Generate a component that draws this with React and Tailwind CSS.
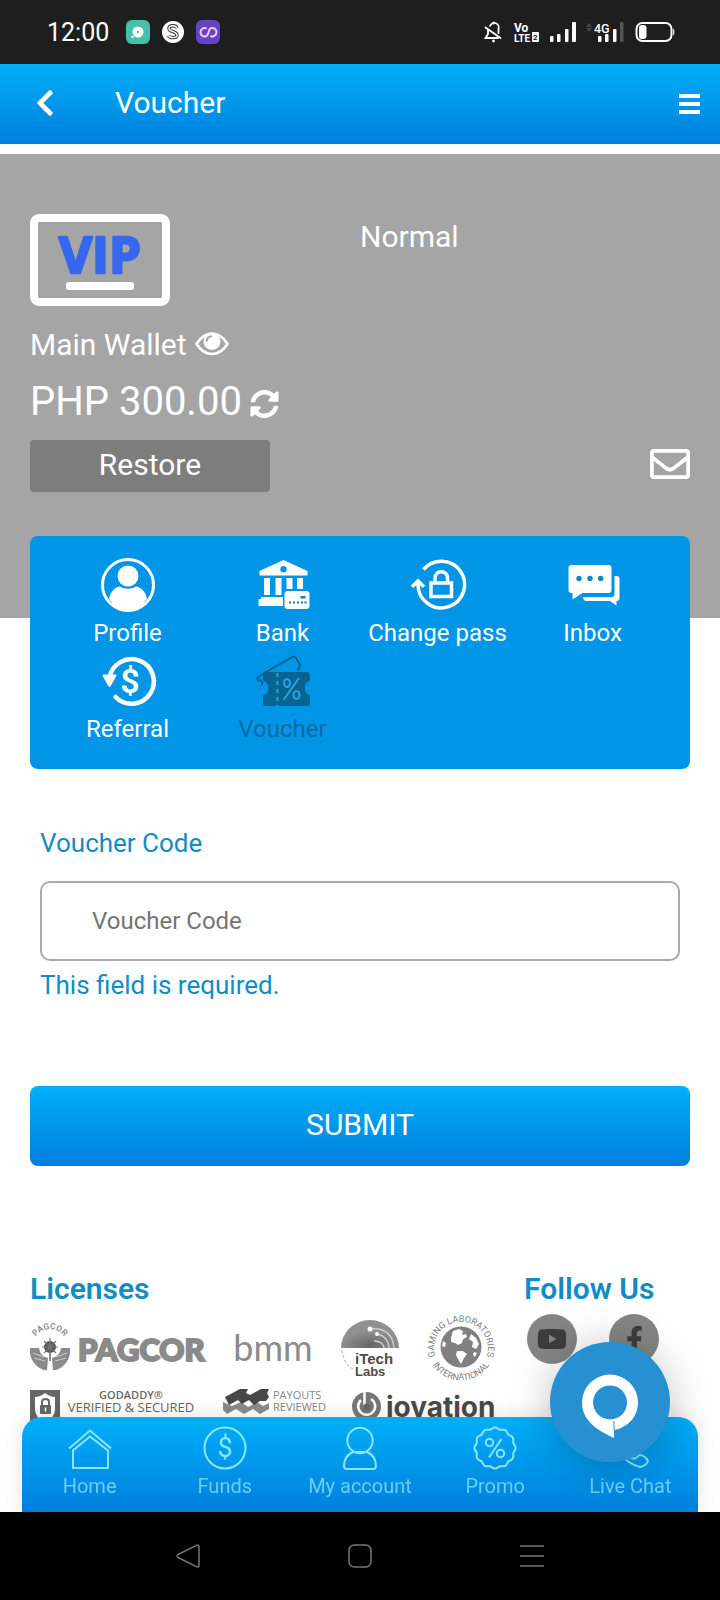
import React, { useState } from "react";
import { FaChevronLeft, FaRegEnvelope, FaSyncAlt, FaYoutube, FaFacebookF } from "react-icons/fa";

/* ---------- Status bar ---------- */

function StatusBar() {
  return (
    <div className="h-16 shrink-0 bg-[#1e1e1e] pl-[47px] pr-[44px] flex items-center justify-between text-white">
      <div className="flex items-center">
        <span className="text-[25px] leading-8 pt-[2px]">12:00</span>
        <svg className="ml-[17px]" width="96" height="24" viewBox="0 0 96 24" aria-hidden="true">
          <rect width="24" height="24" rx="6" fill="#45c0aa" />
          <circle cx="12" cy="12" r="5.5" fill="#fff" />
          <circle cx="12" cy="12" r="1.2" fill="#45c0aa" />
          <circle cx="6.5" cy="17" r="1.2" fill="#fff" />
          <circle cx="47" cy="12" r="11" fill="#fff" />
          <path d="M51 8c-1-3-8-3-8 .4 0 4 8 2.4 8 6.6 0 3.4-7 3.4-8.5.4" fill="none" stroke="#333" strokeWidth="3.4" />
          <path d="M51 8c-1-3-8-3-8 .4 0 4 8 2.4 8 6.6 0 3.4-7 3.4-8.5.4" fill="none" stroke="#fff" strokeWidth="1.4" />
          <rect x="70" width="24" height="24" rx="6" fill="#6343c8" />
          <path d="M80 8.200a4.200 4.200 0 1 0 0 8c3.500-1 2-8 5-8a4.200 4.200 0 1 1 0 8" fill="none" stroke="#f0c8ff" strokeWidth="2" strokeLinecap="round" />
        </svg>
      </div>
      <svg width="196" height="28" viewBox="480 18 196 28" fill="#fff" aria-hidden="true">
        <g fill="none" stroke="#fff" strokeWidth="1.8" strokeLinecap="round">
          <path d="M490 26a4.500 4.500 0 0 1 8.500 3v4M488 29.500v4.500l-2.500 4H498M485.500 27.500l15 10.500" />
          <path d="M493.500 22.500v1" />
        </g>
        <circle cx="493.5" cy="41" r="1.4" />
        <text x="514" y="32" fontSize="12" fontWeight="700">Vo</text>
        <text x="514" y="42" fontSize="10" fontWeight="700">LTE</text>
        <rect x="532" y="32" width="7" height="10" rx="1" />
        <text x="533" y="40" fontSize="8" fontWeight="700" fill="#1e1e1e">2</text>
        <rect x="550" y="36" width="3.5" height="6" rx="1" />
        <rect x="557" y="34" width="3.5" height="8" rx="1" />
        <rect x="565" y="29" width="3.5" height="13" rx="1" />
        <rect x="572" y="22" width="4" height="20" rx="1" />
        <path d="M589 23l3 4h-6zM589 32l3-4h-6z" fill="#444" />
        <text x="594" y="33" fontSize="12.5" fontWeight="500">4G</text>
        <rect x="598" y="36" width="3.5" height="6" rx="1" />
        <rect x="605" y="34" width="3.5" height="8" rx="1" />
        <rect x="613" y="29" width="3.5" height="13" rx="1" />
        <rect x="620" y="22" width="3.5" height="20" rx="1" fill="#555" />
        <rect x="636.5" y="23" width="35" height="18" rx="6" fill="none" stroke="#fff" strokeWidth="2" />
        <rect x="639" y="25" width="7.5" height="14" rx="3" />
        <path d="M673 28.500q1.500 0 1.500 3.500t-1.500 3.500z" fill="#ccc" />
      </svg>
    </div>
  );
}

/* ---------- Header ---------- */

function Header() {
  return (
    <header className="h-20 shrink-0 bg-linear-to-b from-[#02aff8] to-[#027fdc] pl-8 pr-5 pb-[2px] flex items-center text-white">
      <button type="button" aria-label="Back" className="w-[83px]">
        <FaChevronLeft className="w-[26px] h-[30px]" />
      </button>
      <h1 className="text-[30px] leading-[44px] flex-1">Voucher</h1>
      <button type="button" aria-label="Menu" className="pt-[2px]">
        <svg width="21" height="20" viewBox="0 0 21 20" fill="currentColor">
          <rect width="21" height="4" />
          <rect y="8" width="21" height="4" />
          <rect y="16" width="21" height="4" />
        </svg>
      </button>
    </header>
  );
}

/* ---------- Wallet ---------- */

function VipBadge() {
  return (
    <svg width="140" height="92" viewBox="0 0 140 92" role="img" aria-label="VIP">
      <rect x="4" y="4" width="132" height="84" rx="5" fill="none" stroke="#fff" strokeWidth="8" />
      <text x="70" y="59" textAnchor="middle" fontSize="51" fontWeight="700" fill="#3568ec" stroke="#3568ec" strokeWidth="2.5" strokeLinejoin="round" fontFamily="'Open Sans', sans-serif">VIP</text>
      <rect x="36" y="68" width="68" height="8" rx="2.5" fill="#fff" />
    </svg>
  );
}

function EyeIcon() {
  return (
    <svg width="34" height="30" viewBox="0 0 34 30" aria-hidden="true">
      <path d="M1.500 15Q8 4.500 17 4.500T32.500 15Q26 25 17 25T1.500 15z" fill="none" stroke="currentColor" strokeWidth="2.6" />
      <path fillRule="evenodd" fill="currentColor" d="M17 4a8.500 8.500 0 1 1 0 17A8.500 8.500 0 0 1 17 4zM16 6.500q-4.800.5-5.300 5.200 0 1.200 1 1.200t1.100-1.200q.3-3 3.200-3.300 1.200 0 1.200-1t-1.200-.9z" />
    </svg>
  );
}

function Wallet() {
  return (
    <section className="mt-[10px] bg-[#a5a5a5] px-[30px] pt-[60px] pb-[126px] text-white">
      <div className="grid grid-cols-2">
        <VipBadge />
        <span className="text-[30px] leading-[46px]">Normal</span>
      </div>
      <div className="mt-4 flex items-center gap-2 text-[30px] leading-[46px]">
        <span>Main Wallet</span>
        <button type="button" aria-label="Show balance" className="pb-[2px]">
          <EyeIcon />
        </button>
      </div>
      <div className="mt-1 flex items-center gap-2 text-[40px] leading-[60px]">
        <span>PHP 300.00</span>
        <button type="button" aria-label="Refresh balance" className="pt-1">
          <FaSyncAlt className="w-[29px] h-[30px]" />
        </button>
      </div>
      <div className="mt-2 flex items-start justify-between">
        <button type="button" className="w-60 h-[52px] rounded bg-[#7d7d7d] pb-[2px] text-[30px] leading-[44px]">
          Restore
        </button>
        <a href="#inbox" aria-label="Messages" className="h-12 flex items-center">
          <FaRegEnvelope className="size-10" />
        </a>
      </div>
    </section>
  );
}

/* ---------- Account menu ---------- */

const MENU = [
  {
    label: "Profile",
    icon: (
      <>
        <circle cx="27" cy="27" r="25.5" fill="none" stroke="#fff" strokeWidth="3" />
        <circle cx="27" cy="18" r="10.5" />
        <path d="M8 41c1-8 7-12 11-12.500 5 3 11 3 16 0 4 .5 10 4.500 11 12.500a25 25 0 0 1-38 0z" />
        <path d="M9 41a24 24 0 0 0 36 0l-4 8a27 27 0 0 1-28 0z" />
      </>
    ),
  },
  {
    label: "Bank",
    icon: (
      <>
        <path fillRule="evenodd" d="M27.500 2L51.500 13v4.500H3.500V13zM27.500 8a3.200 3.200 0 1 0 0 6.400 3.200 3.200 0 0 0 0-6.400z" />
        <path d="M8 20h6v17H8zM19.500 20h6v17h-6zM30.500 20h6v11h-6zM41 20h6v11h-6zM5 39h22v9H2.500v-7H5z" />
        <rect x="28.5" y="33" width="25" height="18" rx="3" />
        <path d="M44.500 38h5v2.500h-5zM33 43.500h2v2h-2zM37 43.500h2v2h-2zM41 43.500h2v2h-2zM45 43.500h2v2h-2zM48.500 43.500h2v2h-2z" fill="#0c7fc4" />
      </>
    ),
  },
  {
    label: "Change pass",
    icon: (
      <g fill="none" stroke="#fff" strokeWidth="3.5">
        <path d="M12.500 11.500A23.300 23.300 0 1 1 7 27.500v-3" />
        <path d="M1 28.800l6-5.800 6 5.800" />
        <rect x="20" y="25" width="20.5" height="13.5" />
        <path d="M24 25v-5a6.300 6.300 0 0 1 12.600 0v5" />
      </g>
    ),
  },
  {
    label: "Inbox",
    icon: (
      <>
        <path d="M5.500 7h37a3 3 0 0 1 3 3v22a3 3 0 0 1-3 3H16.500L6.500 41.500V35h-1a3 3 0 0 1-3-3V10a3 3 0 0 1 3-3z" />
        <path d="M48.500 18h2q3 0 3 3v19q0 3-3 3v4.500L44 43H20q-2.500 0-3-4h28.500q3 0 3-3z" />
        <g fill="#0c86d0">
          <circle cx="13" cy="20.5" r="2.7" />
          <circle cx="24" cy="20.5" r="2.7" />
          <circle cx="34.7" cy="20.5" r="2.7" />
        </g>
      </>
    ),
  },
  {
    label: "Referral",
    icon: (
      <>
        <path d="M14.500 43A22.300 22.300 0 1 0 8.500 24" fill="none" stroke="#fff" strokeWidth="4.5" strokeLinecap="round" />
        <path d="M2.500 21.500h12L8.500 32z" stroke="#fff" strokeWidth="2" strokeLinejoin="round" />
        <text x="29" y="38.5" textAnchor="middle" fontSize="34" fontWeight="600">$</text>
      </>
    ),
  },
  {
    label: "Voucher",
    active: true,
    icon: (
      <>
        <path d="M10 18L36.500 3q2.500-1 4 1.500l3.500 6.500-2 6M10 18l-8 5q-1.500 1.500 0 3.500c3-1 5.500 1 3.500 5" fill="none" stroke="#096391" strokeWidth="2" />
        <path fill="#096391" d="M10 18h41q3 0 3 3v5.500a8 8 0 0 0 0 15V49q0 3-3 3H10q-3 0-3-3v-7.500a8 8 0 0 0 0-15V21q0-3 3-3z" />
        <path d="M21.500 19v33" stroke="#2ba2dd" strokeWidth="2" strokeDasharray="4 4" />
        <g fill="none" stroke="#2ba2dd" strokeWidth="2">
          <path d="M43 24L27.500 46" />
          <ellipse cx="31" cy="29" rx="3" ry="4" />
          <ellipse cx="40.5" cy="41" rx="3" ry="4" />
        </g>
      </>
    ),
  },
];

function AccountMenu() {
  return (
    <nav className="relative mx-[30px] -mt-[82px] rounded-lg bg-[#0095e7] px-5 pt-[22px] pb-[25px] grid grid-cols-4 gap-y-[6px]">
      {MENU.map(({ label, icon, active }) => (
        <a key={label} href={`#${label}`} className="flex flex-col items-center gap-[6px] text-white">
          <svg className="size-[54px] overflow-visible" viewBox="0 0 54 54" fill="#fff" aria-hidden="true">
            {icon}
          </svg>
          <span className={active ? "text-[24px] leading-[30px] text-[#096ca5]" : "text-[24px] leading-[30px]"}>{label}</span>
        </a>
      ))}
    </nav>
  );
}

/* ---------- Voucher form ---------- */

function VoucherForm() {
  const [code, setCode] = useState("");

  return (
    <form className="mt-[54px] px-[30px]" onSubmit={(e) => e.preventDefault()}>
      <div className="px-[10px] flex flex-col text-[#118cc6] text-[26px] leading-10">
        <label htmlFor="voucher-code">Voucher Code</label>
        <input
          id="voucher-code"
          type="text"
          value={code}
          onChange={(e) => setCode(e.target.value)}
          placeholder="Voucher Code"
          aria-describedby="voucher-error"
          className="mt-[18px] h-20 w-full rounded-[10px] border-2 border-[#a9a9a9] bg-white px-[50px] text-[24px] text-gray-800 placeholder:text-[#757575] outline-none"
        />
        <p id="voucher-error" className="mt-1">This field is required.</p>
      </div>
      <button type="submit" className="mt-[81px] h-20 w-full rounded-lg bg-linear-to-b from-[#02aff8] to-[#027fdc] pb-[2px] text-[30px] leading-[44px] text-white">
        SUBMIT
      </button>
    </form>
  );
}

/* ---------- Footer ---------- */

function PagcorLogo() {
  return (
    <svg className="overflow-visible" width="177" height="70" viewBox="0 0 177 70" fill="#8a8a8a" role="img" aria-label="PAGCOR">
      <path id="pagcor-arc" d="M3.500 29A17 17 0 0 1 36.500 29" fill="none" />
      <text fontSize="8.5" fontWeight="600">
        <textPath href="#pagcor-arc" startOffset="50%" textAnchor="middle">PAGCOR</textPath>
      </text>
      <circle cx="20" cy="34" r="6" fill="#555" />
      <path d="M20 25v20M12 34h16M14 28l12 12M26 28L14 40" stroke="#777" strokeWidth="1.2" />
      <path d="M0 35h9q1 8 9 10l-1 12.500A20 20 0 0 1 0 35zM40 35h-9q-1 8-9 10l1 12.500A20 20 0 0 0 40 35z" />
      <path d="M3 40l11 4M4 45l11 3M37 40l-11 4M36 45l-11 3" stroke="#ccc" strokeWidth="1" />
      <path d="M19 40h2v8h-2z" />
      <text x="48" y="48" fontSize="31" fontWeight="900" fontFamily="Lato, sans-serif" stroke="#8a8a8a" strokeWidth="2">PAGCOR</text>
    </svg>
  );
}

function BmmLogo() {
  return (
    <svg className="overflow-visible" width="80" height="70" viewBox="0 0 80 70" role="img" aria-label="bmm">
      <text x="39" y="48" textAnchor="middle" fontSize="36" fontFamily="Lato, sans-serif" fill="#8c8c8c">bmm</text>
    </svg>
  );
}

function ItechLogo() {
  return (
    <svg className="overflow-visible" width="58" height="70" viewBox="0 0 58 70" role="img" aria-label="iTech Labs">
      <defs>
        <radialGradient id="itech" cy="0.9">
          <stop offset="0" stopColor="#666" />
          <stop offset="1" stopColor="#909090" />
        </radialGradient>
      </defs>
      <path d="M0 35a29 28 0 0 1 58 0z" fill="url(#itech)" />
      <g fill="none" stroke="#ccc" strokeWidth="1.5">
        <path d="M29 16q22-2 24 19M36 21q11 2 12 14M33 28q9 0 10 7" />
      </g>
      <circle cx="29" cy="16" r="2.5" fill="#fff" />
      <circle cx="36" cy="21" r="2" fill="#fff" />
      <path d="M1 37q1 13 11 19" fill="none" stroke="#aaa" strokeDasharray="3 2" />
      <text fontFamily="'Liberation Sans', sans-serif" fontWeight="700" fill="#4c4c4c">
        <tspan x="14" y="51" fontSize="15">iTech</tspan>
        <tspan x="14" y="63" fontSize="13">Labs</tspan>
      </text>
    </svg>
  );
}

function GliLogo() {
  return (
    <svg className="overflow-visible" width="70" height="70" viewBox="0 0 70 70" fill="#808080" role="img" aria-label="Gaming Laboratories International">
      <path id="gli-top" d="M9 43A27 27 0 1 1 61 43" fill="none" />
      <path id="gli-bottom" d="M1.500 34A33.500 33.500 0 0 0 68.500 34" fill="none" />
      <g fontSize="9">
        <text>
          <textPath href="#gli-top" startOffset="50%" textAnchor="middle">GAMING LABORATORIES</textPath>
        </text>
        <text>
          <textPath href="#gli-bottom" startOffset="50%" textAnchor="middle">INTERNATIONAL</textPath>
        </text>
      </g>
      <circle cx="35" cy="34" r="20.5" />
      <path fill="#fff" d="M27 18l6-2 4 2-1 4 4-1 1 3-4 2-1 4-4 2-3-2-4-1v-4zM45 21l5 4 3 6-3 5-4-2 1-5-4-3zM31 38l6 0 4 3-3 4-3 6-3-5-2-4zM17 28l3 2-1 4-3-1zM48 39l3 1-2 4-2-2z" />
    </svg>
  );
}

function GodaddyLogo() {
  return (
    <svg width="165" height="42" viewBox="0 0 165 42" fill="#666" role="img" aria-label="GoDaddy verified and secured">
      <rect y="3" width="30" height="39" />
      <path d="M15 6q5 4 10 4v12q0 9-10 13Q5 31 5 22V10q5 0 10-4z" fill="#fff" />
      <rect x="10" y="18" width="11" height="9" rx="1" />
      <path d="M12 18v-3q0-3 3.500-3t3.500 3v3" fill="none" stroke="#666" strokeWidth="2" />
      <rect x="14.7" y="20.5" width="1.6" height="4" fill="#fff" />
      <text fontFamily="'Open Sans', sans-serif" textAnchor="middle">
        <tspan x="101" y="12" fontSize="11" fontWeight="600">GODADDY®</tspan>
        <tspan x="101" y="25" fontSize="13" fontWeight="500">VERIFIED &amp; SECURED</tspan>
      </text>
    </svg>
  );
}

function PayoutsLogo() {
  return (
    <svg className="overflow-visible" width="101" height="42" viewBox="0 0 101 42" role="img" aria-label="Payouts reviewed">
      <path d="M0 15l9 4 9-4 7 5 9-5 6 4 6-3v6l-9 5-7-5-9 5-8-5-9 5-4-4z" fill="#8b8b8b" />
      <path d="M2 10L17 2h8l-2 4 4 2 11-6h8l-2 4 2 4-3 4-6 0-6 4-5-5-7 4-4-4-9 5z" fill="#474747" />
      <text fontFamily="'Open Sans', sans-serif" fontWeight="400" fill="#858585" fontSize="11">
        <tspan x="50" y="12">PAYOUTS</tspan>
        <tspan x="50" y="24">REVIEWED</tspan>
      </text>
    </svg>
  );
}

function IovationLogo() {
  return (
    <svg className="overflow-visible" width="144" height="42" viewBox="0 0 144 42" role="img" aria-label="iovation">
      <circle cx="14.5" cy="19.5" r="14.5" fill="#777" />
      <path d="M9 13a8.500 8.500 0 1 0 10-1" fill="none" stroke="#fff" strokeWidth="2.5" />
      <path d="M12.500 4v16" stroke="#fff" strokeWidth="2.5" />
      <circle cx="14.5" cy="20" r="3.5" fill="#666" />
      <text x="34" y="30" fontSize="28" fontWeight="700" fontFamily="Inter, sans-serif" fill="#4a4a4a">iovation</text>
    </svg>
  );
}

function Footer() {
  return (
    <footer className="mt-[101px] px-[30px] pb-[168px] flex justify-between">
      <section className="w-[466px]">
        <h2 className="text-[30px] leading-[44px] font-semibold text-[#118cc6]">Licenses</h2>
        <div className="pt-[2px] flex justify-between">
          <PagcorLogo />
          <BmmLogo />
          <ItechLogo />
          <GliLogo />
        </div>
        <div className="mt-1 flex justify-between">
          <GodaddyLogo />
          <PayoutsLogo />
          <IovationLogo />
        </div>
      </section>
      <section className="w-[166px]">
        <h2 className="text-[30px] leading-[44px] font-semibold text-[#118cc6]">Follow Us</h2>
        <div className="mt-[3px] px-[3px] flex gap-8">
          <a href="#youtube" aria-label="YouTube" className="size-[50px] rounded-full bg-[#858585] flex items-center justify-center text-[#3d3d3d]">
            <FaYoutube className="size-[30px]" />
          </a>
          <a href="#facebook" aria-label="Facebook" className="size-[50px] rounded-full bg-[#858585] flex items-center justify-center text-[#3d3d3d]">
            <FaFacebookF className="size-[27px]" />
          </a>
        </div>
      </section>
    </footer>
  );
}

/* ---------- Tab bar ---------- */

// wavy seal outline with twelve bumps
const SEAL = Array.from({ length: 120 }, (_, i) => {
  const a = (i / 120) * Math.PI * 2;
  const r = 19.8 + 0.8 * Math.cos(12 * a);
  return `${(22 + r * Math.cos(a)).toFixed(2)},${(23 + r * Math.sin(a)).toFixed(2)}`;
}).join(" ");

const TABS = [
  {
    label: "Home",
    icon: <path d="M1 23.500L22 5.500l21 18M5 25.500V43h35V25.500L22 11.500z" />,
  },
  {
    label: "Funds",
    icon: (
      <>
        <circle cx="22" cy="23" r="20.5" />
        <text x="22" y="32" textAnchor="middle" fontSize="27" fill="currentColor" stroke="none">$</text>
      </>
    ),
  },
  {
    label: "My account",
    icon: (
      <>
        <circle cx="22" cy="15.5" r="12.7" />
        <path d="M15 27h14q9 4 9 14 0 3-3 3H9q-3 0-3-3 0-10 9-14z" />
      </>
    ),
  },
  {
    label: "Promo",
    icon: (
      <>
        <polygon points={SEAL} />
        <circle cx="16.5" cy="17.5" r="3.7" />
        <circle cx="27.5" cy="28.5" r="3.7" />
        <path d="M28.500 14L16 32.500" />
      </>
    ),
  },
  {
    label: "Live Chat",
    icon: <path d="M4 6q2 28 28 36 6-1 8-6-3-6-9-6-3 5-8 3M4 6q8-4 12 8l-5 4q2 8 12 15" />,
  },
];

function TabBar() {
  return (
    <nav className="mx-[22px] h-[95px] rounded-t-[20px] bg-linear-to-b from-[#02aff8] to-[#027fdc] pt-2 grid grid-cols-5 shadow-[0_0_20px_rgba(0,0,0,0.12)]">
      {TABS.map(({ label, icon }) => (
        <a key={label} href={`#${label}`} className="flex flex-col items-center gap-[3px] text-[#67cffb]">
          <svg className="size-11 overflow-visible text-[#8ae6ff]" viewBox="0 0 44 44" fill="none" stroke="currentColor" strokeWidth="2" aria-hidden="true">
            {icon}
          </svg>
          <span className="text-[20px] leading-7">{label}</span>
        </a>
      ))}
    </nav>
  );
}

function SystemKeys() {
  return (
    <div className="relative h-[88px] bg-black flex items-center justify-center gap-[148px] text-[#777]">
      <button type="button" aria-label="System back">
        <svg width="24" height="24" viewBox="0 0 24 24" fill="none" stroke="currentColor" strokeWidth="1.5">
          <path d="M2 10.500L21 1.200q2-.5 2 1.500v18.600q0 2-2 1.500L2 13.500q-2-1.500 0-3z" />
        </svg>
      </button>
      <button type="button" aria-label="System home">
        <svg width="24" height="24" viewBox="0 0 24 24" fill="none" stroke="currentColor" strokeWidth="1.5">
          <rect x="1" y="1" width="22" height="22" rx="5" />
        </svg>
      </button>
      <button type="button" aria-label="Recent apps">
        <svg width="24" height="24" viewBox="0 0 24 24" fill="none" stroke="currentColor" strokeWidth="1.5">
          <path d="M0 2h24M0 12h24M0 22h24" />
        </svg>
      </button>
    </div>
  );
}

function ChatButton() {
  return (
    <button type="button" aria-label="Open chat" className="fixed right-[50px] bottom-[138px] size-[120px] rounded-full bg-[#2690d2] shadow-[0_4px_40px_rgba(0,0,0,0.25)]">
      <svg viewBox="0 0 120 120" fill="#fff">
        <path fillRule="evenodd" d="M60 32.500a28 28 0 0 1 28 28c0 14-10 25-24 27.500v8C54 91 32 82 32 60.500a28 28 0 0 1 28-28zM60 43.500a17 17 0 0 0-17 17C43 70 51 77 60 77.500 70 77 77 70 77 60.500a17 17 0 0 0-17-17z" />
        <path d="M64 79v9" stroke="#2690d2" strokeWidth="1" />
      </svg>
    </button>
  );
}

export default function App() {
  return (
    <div className="min-h-screen flex flex-col bg-white font-['Roboto',sans-serif]">
      <StatusBar />
      <Header />
      <main className="flex-1">
        <Wallet />
        <AccountMenu />
        <VoucherForm />
        <Footer />
      </main>
      <div className="fixed inset-x-0 bottom-0">
        <TabBar />
        <SystemKeys />
      </div>
      <ChatButton />
    </div>
  );
}
